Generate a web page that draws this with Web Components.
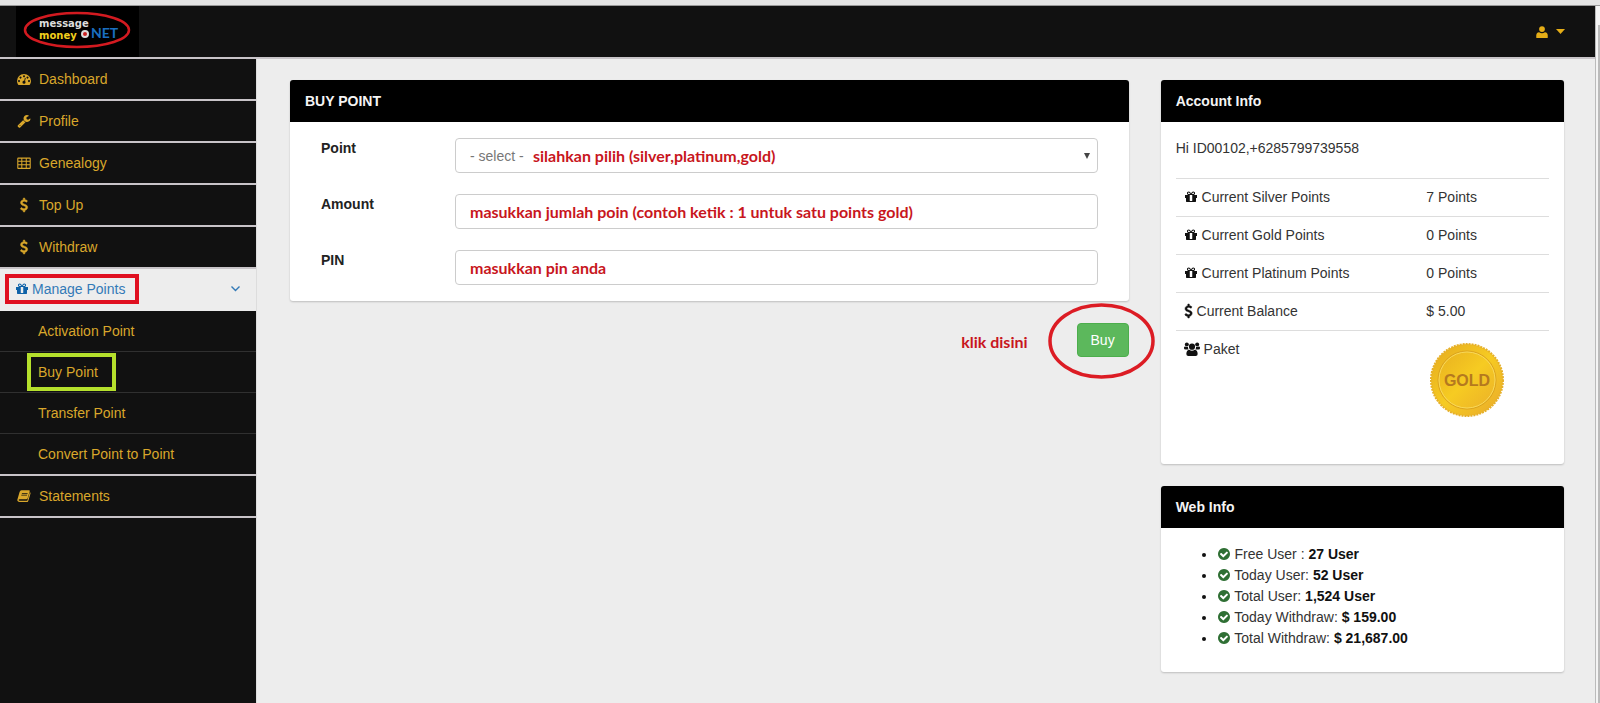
<!DOCTYPE html>
<html lang="id">
<head>
<meta charset="utf-8">
<title>Buy Point</title>
<style>
  html, body { margin: 0; height: 100%; }
  body {
    background: #ededed;
    color: #333;
    font: 14px/20px "Liberation Sans", Arial, sans-serif;
  }
</style>
</head>
<body>
<app-shell>
  <app-header slot="header"></app-header>
  <side-nav slot="nav">
    <nav-item icon="dashboard">Dashboard</nav-item>
    <nav-item icon="wrench">Profile</nav-item>
    <nav-item icon="table">Genealogy</nav-item>
    <nav-item icon="dollar">Top Up</nav-item>
    <nav-item icon="dollar">Withdraw</nav-item>
    <nav-item icon="gift" open>Manage Points</nav-item>
    <sub-item>Activation Point</sub-item>
    <sub-item marked>Buy Point</sub-item>
    <sub-item>Transfer Point</sub-item>
    <sub-item>Convert Point to Point</sub-item>
    <nav-item icon="book">Statements</nav-item>
  </side-nav>
  <buy-form slot="main"></buy-form>
  <info-panel slot="aside" heading="Account Info"><account-info></account-info></info-panel>
  <info-panel slot="aside" heading="Web Info"><web-info></web-info></info-panel>
</app-shell>

<script>
const ICONS = {
  wrench: '<path d="M448 1472q0-26-19-45t-45-19-45 19-19 45 19 45 45 19 45-19 19-45zm644-420l-682 682q-37 37-90 37-52 0-91-37l-106-108q-38-36-38-90 0-53 38-91l681-681q39 98 114.5 173.5t173.5 114.5zm634-435q0 39-23 106-47 134-164.5 217.5t-258.5 83.5q-185 0-316.5-131.5t-131.5-316.5 131.5-316.5 316.5-131.5q58 0 121.5 16.5t107.5 46.5q16 11 16 28t-16 28l-293 169v224l193 107q5-3 79-48.5t135.5-81 70.5-35.5q15 0 23.5 10t8.5 25z"/>',
  dollar: '<path d="M1362 1185q0 153-99.500 263.500t-258.500 136.500v175q0 14-9 23t-23 9h-135q-13 0-22.500-9.500t-9.500-22.500v-175q-66-9-127.500-31t-101.500-44.500-74-48-46.500-37.500-17.500-18q-17-21-2-41l103-135q7-10 23-12 15-2 24 9l2 2q113 99 243 125 37 8 74 8 81 0 142.500-43t61.500-122q0-28-15-53t-33.500-42-58.500-37.500-66-32-80-32.500q-39-16-61.500-25t-61.500-26.500-62.500-31-56.500-35.500-53.500-42.500-43.500-49-35.500-58-21-66.500-8.500-78q0-138 98-242t255-134v-180q0-13 9.500-22.500t22.500-9.500h135q14 0 23 9t9 23v176q57 6 110.500 23t87 33.500 63.500 37.500 39 29 15 14q17 18 5 38l-81 146q-8 15-23 16-14 3-27-7-3-3-14.500-12t-39-26.500-58.500-32-74.500-26-85.500-11.500q-95 0-155 43t-60 111q0 26 8.500 48t29.500 41.500 39.500 33 56 31 60.500 27 70 27.500q53 20 81 31.500t76 35 75.500 42.500 62 50 53 63.500 31.500 76.500 13 94z" stroke="currentColor" stroke-width="60"/>',
  gift: '<path d="M1056 1356v-716h-320v716q0 25 18 38.500t46 13.500h192q28 0 46-13.500t18-38.500zm-456-844h195l-126-161q-26-31-69-31-40 0-68 28t-28 68 28 68 68 28zm688-96q0-40-28-68t-68-28q-43 0-69 31l-125 161h194q40 0 68-28t28-68zm376 256v320q0 14-9 23t-23 9h-96v416q0 40-28 68t-68 28h-1088q-40 0-68-28t-28-68v-416h-96q-14 0-23-9t-9-23v-320q0-14 9-23t23-9h440q-93 0-158.500-65.500t-65.500-158.500 65.500-158.500 158.500-65.500q107 0 168 77l128 165 128-165q61-77 168-77 93 0 158.500 65.500t65.500 158.500-65.500 158.500-158.500 65.500h440q14 0 23 9t9 23z"/>',
  user: '<path d="M896 896a370 370 0 1 0 0-740 370 370 0 0 0 0 740zM230 1664q-70 0-70-110v-220q0-360 360-400 376 250 752 0 360 40 360 400v220q0 110-70 110z"/>',
  check: '<path d="M1412 734q0-28-18-46l-91-90q-19-19-45-19t-45 19l-408 407-226-226q-19-19-45-19t-45 19l-91 90q-18 18-18 46 0 27 18 45l362 362q19 19 45 19 27 0 46-19l543-543q18-18 18-45zm252 162q0 209-103 385.500t-279.500 279.500-385.500 103-385.500-103-279.500-279.500-103-385.500 103-385.500 279.500-279.500 385.500-103 385.500 103 279.500 279.500 103 385.500z"/>',
  dashboard: '<path fill-rule="evenodd" d="M896 256A896 896 0 0 0 0 1152q0 230 128 452 20 60 80 60h1376q60 0 80-60 128-222 128-452A896 896 0 0 0 896 256zM256 1024a128 128 0 1 0 1 0zM450 590a128 128 0 1 0 1 0zM896 400a128 128 0 1 0 1 0zM1342 590a128 128 0 1 0 1 0zM1536 1024a128 128 0 1 0 1 0zM930 1110L1010 730l110 30-90 380q90 80 60 190a196 196 0 1 1-160-220z"/>',
  table: '<path fill-rule="evenodd" d="M160 192h1472q128 0 128 128v1216q0 128-128 128H160q-128 0-128-128V320q0-128 128-128zM170 350v270h380V350zM680 350v270h440V350zM1250 350v270h370V350zM170 750v300h380V750zM680 750v300h440V750zM1250 750v300h370V750zM170 1180v330h380v-330zM680 1180v330h440v-330zM1250 1180v330h370v-330z"/>',
  book: '<path fill-rule="evenodd" d="M570 170h970q120 20 90 130l-270 880q-50 140-170 140H330q-100 0-120 70 0 120 130 120h880q80 0 110-80l320-1030q120 60 80 180l-290 940q-60 150-200 150H300Q90 1670 40 1480q-20-90 20-180L330 370q60-200 240-200zM640 500l-30 100h730l30-100zM570 720l-30 100h730l30-100z"/>',
  users: '<circle cx="340" cy="350" r="240"/><circle cx="1580" cy="350" r="240"/><circle cx="960" cy="620" r="370"/><path d="M0 720q20-110 130-110 170 80 340 20-10 200 90 340H180Q0 970 0 800zM1920 720q-20-110-130-110-170 80-340 20 10 200-90 340h380q180 0 180-170zM520 1730q-240 0-240-220 0-450 340-520 340 250 680 0 340 70 340 520 0 220-240 220z"/>'
}

class FaIcon extends HTMLElement {
  connectedCallback() {
    const name = this.getAttribute('name')
    const wide = name === 'users'
    this.attachShadow({ mode: 'open' }).innerHTML = `
      <style>
        :host { display: inline-block; width: ${wide ? 16 : 14}px; height: 14px; vertical-align: -2px; }
        svg { display: block; width: 100%; height: 100%; fill: currentColor; overflow: visible; }
      </style>
      <svg viewBox="0 0 ${wide ? 1920 : 1792} 1792" preserveAspectRatio="xMidYMid slice" aria-hidden="true">${ICONS[name]}</svg>
    `
  }
}

class AppShell extends HTMLElement {
  constructor() {
    super()
    this.attachShadow({ mode: 'open' }).innerHTML = `
      <style>
        :host {
          display: grid;
          grid-template: auto auto 1fr / 257px 1fr 5px;
          min-height: 100vh;
        }
        .strip { grid-column: 1 / -1; height: 5px; background: #e4e4e4; border-bottom: 1px solid #999; }
        .header { grid-column: 1 / 3; }
        .nav { background: #111; border-right: 1px solid #ddd; }
        .content {
          display: grid;
          grid-template-columns: 2fr 1fr;
          align-items: start;
          padding: 21px 15px 21px 17px;
        }
        .main, .aside { min-width: 0; padding: 0 16px; }
        .aside { display: grid; gap: 22px; }
        .scroll {
          grid-area: 2 / 3 / 4 / 4;
          display: flex;
          justify-content: flex-end;
          border-left: 1px solid #bbb;
          background: #f4f4f4;
        }
        .scroll i { width: 2px; margin-top: 19px; background: #bbb; }
      </style>
      <div class="strip"></div>
      <div class="header"><slot name="header"></slot></div>
      <div class="nav"><slot name="nav"></slot></div>
      <div class="content">
        <main class="main"><slot name="main"></slot></main>
        <aside class="aside"><slot name="aside"></slot></aside>
      </div>
      <div class="scroll"><i></i></div>
    `
  }
}

class AppHeader extends HTMLElement {
  constructor() {
    super()
    this.attachShadow({ mode: 'open' }).innerHTML = `
      <style>
        :host {
          display: flex;
          justify-content: space-between;
          align-items: center;
          height: 51px;
          padding: 0 30px 0 16px;
          background: #111;
          border-bottom: 2px solid #c8c4c8;
        }
        a, svg { display: block; }
        button {
          display: flex;
          align-items: center;
          gap: 7px;
          padding: 0;
          border: 0;
          background: none;
          color: #e5ad17;
        }
      </style>
      <a href="#" aria-label="Home">
        <svg width="123" height="51" viewBox="0 0 123 51">
          <rect width="123" height="51" fill="#000"/>
          <ellipse cx="61" cy="24" rx="52" ry="17" fill="none" stroke="#d31a20" stroke-width="2.500"/>
          <g font-family="DejaVu Sans, sans-serif" font-weight="700" font-size="10">
            <text x="23" y="21" fill="#ddd">message</text>
            <text x="23" y="33" fill="#f2cf1c">money</text>
          </g>
          <circle cx="69" cy="28" r="3" fill="#c22" stroke="#ddd" stroke-width="2"/>
          <text x="75" y="32" font-family="Lato, sans-serif" font-weight="700" font-size="14" fill="#1a6fc0">NET</text>
        </svg>
      </a>
      <button type="button" aria-label="Account">
        <fa-icon name="user"></fa-icon>
        <svg width="9" height="5" viewBox="0 0 9 5"><path d="M0 0h9L4.500 5z" fill="currentColor"/></svg>
      </button>
    `
  }
}

class SideNav extends HTMLElement {
  constructor() {
    super()
    this.attachShadow({ mode: 'open' }).innerHTML = `
      <style>:host, nav { display: block; }</style>
      <nav><slot></slot></nav>
    `
  }
}

class NavItem extends HTMLElement {
  connectedCallback() {
    this.attachShadow({ mode: 'open' }).innerHTML = `
      <style>
        :host { display: block; }
        a {
          display: flex;
          align-items: center;
          box-sizing: border-box;
          height: 42px;
          padding: 0 16px 0 17px;
          border-bottom: 2px solid #c8c4c8;
          color: #d9a72b;
          text-decoration: none;
        }
        .label { display: flex; align-items: center; gap: 8px; }
        :host([open]) a {
          justify-content: space-between;
          padding-left: 5px;
          border-color: #ededed;
          background: #ededed;
          color: #337ab7;
        }
        :host([open]) .label { gap: 3px; padding: 1px 10px 1px 6px; border: 4px solid #e01020; }
        :host([open]) fa-icon { color: #0f62a8; }
        .chevron { display: none; }
        :host([open]) .chevron { display: block; }
      </style>
      <a href="#">
        <span class="label"><fa-icon name="${this.getAttribute('icon')}"></fa-icon><slot></slot></span>
        <svg class="chevron" width="9" height="6" viewBox="0 0 9 6"><path d="M.5.5l4 4 4-4" fill="none" stroke="currentColor" stroke-width="1.400"/></svg>
      </a>
    `
  }
}

class SubItem extends HTMLElement {
  constructor() {
    super()
    this.attachShadow({ mode: 'open' }).innerHTML = `
      <style>
        :host { display: block; }
        a {
          display: flex;
          align-items: center;
          box-sizing: border-box;
          height: 41px;
          padding-left: 27px;
          border-bottom: 1px solid #303030;
          color: #d9a72b;
          text-decoration: none;
        }
        span { padding: 5px 14px 5px 7px; border: 4px solid transparent; }
        :host([marked]) span { border-color: #b5e02c; }
        :host(:nth-of-type(4)) a { height: 42px; border-bottom: 2px solid #c8c4c8; }
      </style>
      <a href="#"><span><slot></slot></span></a>
    `
  }
}

class InfoPanel extends HTMLElement {
  connectedCallback() {
    this.attachShadow({ mode: 'open' }).innerHTML = `
      <style>
        :host {
          display: block;
          overflow: hidden;
          border-radius: 3px;
          background: #fff;
          box-shadow: 0 1px 2px rgba(0, 0, 0, .2);
        }
        h2 {
          margin: 0;
          padding: 11px 15px;
          background: #000;
          color: #f4f4f4;
          font-size: 14px;
          line-height: 20px;
        }
        .body { padding: 16px 15px; }
      </style>
      <h2>${this.getAttribute('heading')}</h2>
      <div class="body"><slot></slot></div>
    `
  }
}

class BuyForm extends HTMLElement {
  constructor() {
    super()
    this.attachShadow({ mode: 'open' }).innerHTML = `
      <style>
        :host { display: block; }
        .fields {
          display: grid;
          grid-template-columns: 134px 1fr;
          row-gap: 21px;
          padding: 0 16px;
        }
        label { color: #222; font-weight: bold; }
        .control { display: grid; align-items: center; }
        .control > * { grid-area: 1 / 1; }
        select, input {
          appearance: none;
          box-sizing: border-box;
          width: 100%;
          height: 35px;
          margin: 0;
          padding: 0 14px;
          border: 1px solid #ccc;
          border-radius: 4px;
          background: #fff;
          color: #777;
          font: inherit;
        }
        .hint, input { color: #c8161d; font: bold 16px/20px Lato, Carlito, sans-serif; }
        .control .hint { margin-left: 78px; pointer-events: none; }
        .arrow { justify-self: end; margin-right: 8px; pointer-events: none; }
        .actions {
          display: flex;
          justify-content: flex-end;
          align-items: center;
          gap: 49px;
          margin-top: 22px;
        }
        .actions .hint { padding-top: 4px; }
        .target { position: relative; }
        .target svg { position: absolute; left: -29px; top: -20px; pointer-events: none; }
        button {
          display: block;
          height: 34px;
          padding: 0 13px;
          border: 1px solid #4cae4c;
          border-radius: 4px;
          background: #5cb85c;
          color: #fff;
          font: inherit;
        }
      </style>
      <form>
        <info-panel heading="BUY POINT">
          <div class="fields">
            <label for="point">Point</label>
            <div class="control">
              <select id="point"><option>- select -</option></select>
              <span class="hint">silahkan pilih (silver,platinum,gold)</span>
              <svg class="arrow" width="6" height="6" viewBox="0 0 6 6"><path d="M0 0h6L3 6z" fill="#444"/></svg>
            </div>
            <label for="amount">Amount</label>
            <div class="control"><input id="amount" type="text" value="masukkan jumlah poin (contoh ketik : 1 untuk satu points gold)"></div>
            <label for="pin">PIN</label>
            <div class="control"><input id="pin" type="text" value="masukkan pin anda"></div>
          </div>
        </info-panel>
        <div class="actions">
          <span class="hint">klik disini</span>
          <span class="target">
            <button type="button">Buy</button>
            <svg width="107" height="76" viewBox="0 0 107 76"><ellipse cx="53.500" cy="38" rx="51.500" ry="36" fill="none" stroke="#dc1c24" stroke-width="3.500"/></svg>
          </span>
        </div>
      </form>
    `
  }
}

class AccountInfo extends HTMLElement {
  constructor() {
    super()
    const rows = [
      ['gift', 'Current Silver Points', '7 Points'],
      ['gift', 'Current Gold Points', '0 Points'],
      ['gift', 'Current Platinum Points', '0 Points'],
      ['dollar', 'Current Balance', '$ 5.00']
    ]
    this.attachShadow({ mode: 'open' }).innerHTML = `
      <style>
        :host { display: block; }
        p { margin: 0 0 20px; }
        table { width: 100%; margin-bottom: 22px; border-collapse: collapse; table-layout: fixed; }
        th, td {
          height: 21px;
          padding: 8px;
          border-top: 1px solid #ddd;
          font-weight: normal;
          text-align: left;
          vertical-align: top;
        }
        th { width: 65%; box-sizing: border-box; }
        fa-icon { color: #111; }
        fa-icon[name="dollar"] { width: 9px; }
        svg { display: block; margin: 3px 0 0 3px; }
      </style>
      <p>Hi ID00102,+6285799739558</p>
      <table>
        ${rows.map(([icon, name, value]) => `
          <tr><th scope="row"><fa-icon name="${icon}"></fa-icon> ${name}</th><td>${value}</td></tr>`).join('')}
        <tr>
          <th scope="row"><fa-icon name="users"></fa-icon> Paket</th>
          <td>
            <svg width="76" height="76" viewBox="0 0 76 76">
              <defs>
                <linearGradient id="coin" x1="0" y1="0" x2="1" y2="1">
                  <stop offset="0" stop-color="#e5a91f"/>
                  <stop offset=".5" stop-color="#f6cb22"/>
                  <stop offset="1" stop-color="#e9a92b"/>
                </linearGradient>
              </defs>
              <circle cx="38" cy="38" r="36" fill="url(#coin)"/>
              <circle cx="38" cy="38" r="36" fill="none" stroke="#e6b02a" stroke-width="2" stroke-dasharray="2 1"/>
              <circle cx="38" cy="38" r="29" fill="none" stroke="#dba31f"/>
              <circle cx="38" cy="38" r="28" fill="none" stroke="#f8d85a"/>
              <text x="38" y="44" text-anchor="middle" font-family="Liberation Sans, sans-serif" font-weight="700" font-size="16" fill="#b5791f">GOLD</text>
            </svg>
          </td>
        </tr>
      </table>
    `
  }
}

class WebInfo extends HTMLElement {
  constructor() {
    super()
    const stats = [
      ['Free User :', '27 User'],
      ['Today User:', '52 User'],
      ['Total User:', '1,524 User'],
      ['Today Withdraw:', '$ 159.00'],
      ['Total Withdraw:', '$ 21,687.00']
    ]
    this.attachShadow({ mode: 'open' }).innerHTML = `
      <style>
        :host { display: block; }
        ul { margin: 0 0 7px; padding-left: 41px; }
        li { line-height: 21px; }
        li::marker, b { color: #111; }
        fa-icon { color: #2f6f34; }
      </style>
      <ul>${stats.map(([name, value]) => `<li><fa-icon name="check"></fa-icon> ${name} <b>${value}</b></li>`).join('')}</ul>
    `
  }
}

customElements.define('fa-icon', FaIcon)
customElements.define('app-shell', AppShell)
customElements.define('app-header', AppHeader)
customElements.define('side-nav', SideNav)
customElements.define('nav-item', NavItem)
customElements.define('sub-item', SubItem)
customElements.define('info-panel', InfoPanel)
customElements.define('buy-form', BuyForm)
customElements.define('account-info', AccountInfo)
customElements.define('web-info', WebInfo)
</script>
</body>
</html>
